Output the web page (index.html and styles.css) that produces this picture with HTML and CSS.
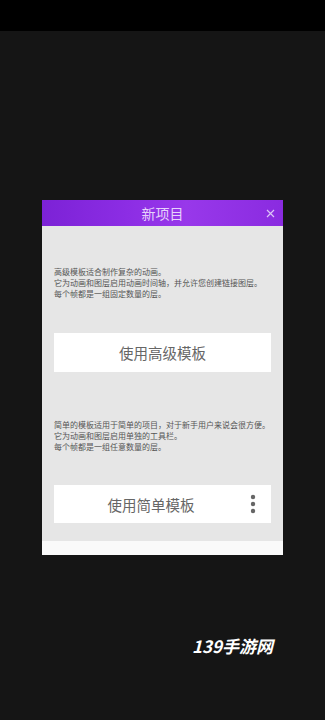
FILE: index.html
```html
<!DOCTYPE html>
<html lang="zh">
<head>
<meta charset="utf-8">
<link rel="stylesheet" href="styles.css">
</head>
<body>
<div class="statusbar"></div>
<main class="stage">
  <section class="dialog">
    <header class="dlg-head">
      <span class="dlg-title">新项目</span>
      <svg class="dlg-close" width="9" height="9" viewBox="0 0 9 9"><path d="M1 1L8 8M8 1L1 8" stroke="#dcc4f7" stroke-width="1.2" fill="none"/></svg>
    </header>
    <div class="dlg-body">
      <p class="desc desc-adv">高级模板适合制作复杂的动画。<br>它为动画和图层启用动画时间轴，并允许您创建链接图层。<br>每个帧都是一组固定数量的层。</p>
      <div class="btn btn-adv">使用高级模板</div>
      <p class="desc desc-simple">简单的模板适用于简单的项目，对于新手用户来说会很方便。<br>它为动画和图层启用单独的工具栏。<br>每个帧都是一组任意数量的层。</p>
      <div class="btn btn-simple">
        <span class="btn-label">使用简单模板</span>
        <svg class="btn-more" width="6" height="20" viewBox="0 0 6 20"><circle cx="3" cy="3" r="2.2" fill="#666"/><circle cx="3" cy="10" r="2.2" fill="#666"/><circle cx="3" cy="17" r="2.2" fill="#666"/></svg>
      </div>
    </div>
    <div class="dlg-foot"></div>
  </section>
  <div class="watermark">139手游网</div>
</main>
</body>
</html>
```

FILE: styles.css
```css
html, body {
  margin: 0;
  padding: 0;
  background: #151515;
  font-family: "Noto Sans CJK SC", "Noto Sans", sans-serif;
}
.statusbar {
  height: 31px;
  background: #000;
}
.stage {
  padding-top: 169px;
}
.dialog {
  width: 241px;
  margin-left: 42px;
  display: flex;
  flex-direction: column;
}
.dlg-head {
  position: relative;
  height: 26px;
  background: linear-gradient(90deg, #7c22d6 0%, #8c2de4 35%, #9838ea 60%, #8a2be0 100%);
  display: flex;
  align-items: center;
  justify-content: center;
}
.dlg-title {
  color: #e6d2fb;
  font-size: 14px;
  line-height: 26px;
}
.dlg-close {
  position: absolute;
  right: 8px;
  top: 9px;
}
.dlg-body {
  background: #e6e6e6;
  padding: 40px 12px 18px 12px;
  display: flex;
  flex-direction: column;
}
.desc {
  margin: 0;
  font-size: 8px;
  line-height: 11px;
  color: #555;
  white-space: nowrap;
}
.desc-simple {
  margin-top: 47px;
}
.btn {
  background: #fff;
  color: #666;
  font-size: 14.5px;
  display: flex;
  align-items: center;
}
.btn-adv {
  margin-top: 34px;
  height: 39px;
  justify-content: center;
}
.btn-simple {
  margin-top: 33px;
  height: 38px;
}
.btn-label {
  flex: 1;
  text-align: center;
}
.btn-more {
  margin-right: 15px;
  margin-left: 2px;
}
.dlg-foot {
  height: 14px;
  background: #fafafa;
}
.watermark {
  margin-top: 81px;
  padding-left: 192px;
  color: #fff;
  font-size: 17px;
  line-height: 20px;
  font-weight: bold;
  font-style: italic;
}
```
